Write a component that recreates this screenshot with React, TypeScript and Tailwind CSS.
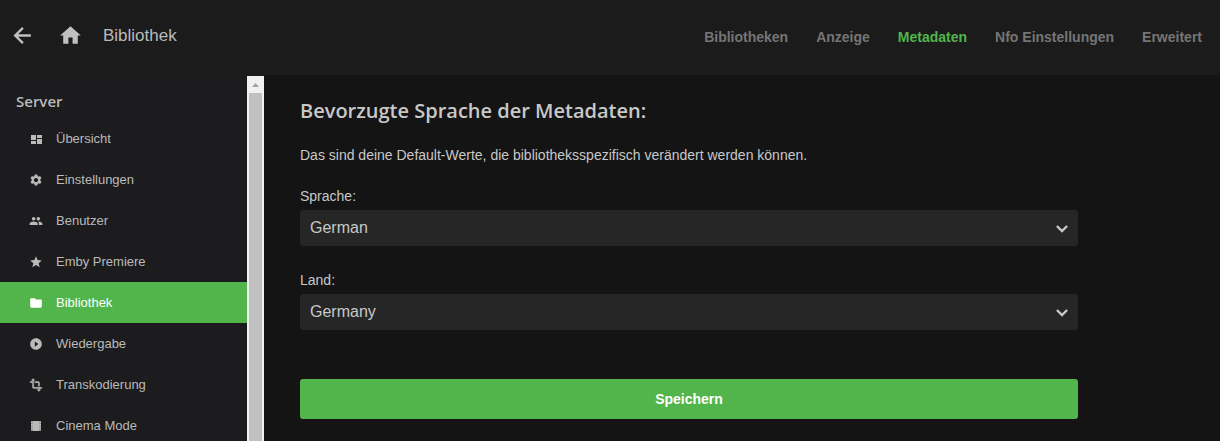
import { useState } from "react"
import type { ComponentType } from "react"
import { MdFolder, MdHome, MdPeople, MdPlayCircleFilled, MdSettings, MdStar } from "react-icons/md"

interface IconProps {
  className?: string
}

interface NavItem {
  label: string
  icon: ComponentType<IconProps>
}

const BackIcon = ({ className }: IconProps) => (
  <svg viewBox="0 0 24 24" className={className} fill="none" stroke="currentColor" strokeWidth="2.3">
    <path d="M20 12H5M12.4 4.6 5 12l7.4 7.4" />
  </svg>
)

const DashboardIcon = ({ className }: IconProps) => (
  <svg viewBox="0 0 14 14" className={className} fill="currentColor">
    <path d="M2 3h5v5H2zM2 9h5v3H2zM8 3h5v3H8zM8 7h5v5H8z" />
  </svg>
)

const TransformIcon = ({ className }: IconProps) => (
  <svg viewBox="0 0 24 24" className={className} fill="currentColor" stroke="currentColor" strokeWidth="0.7">
    <path d="M22 18v-2H8V4h2L7 1 4 4h2v2H2v2h4v8c0 1.1.9 2 2 2h8v2h-2l3 3 3-3h-2v-2h4zM10 8h6v6h2V8c0-1.1-.9-2-2-2h-6v2z" />
  </svg>
)

const FilmIcon = ({ className }: IconProps) => (
  <svg viewBox="0 0 14 14" className={className} fill="currentColor">
    <path d="M4 2h6v10H4z" />
    <path d="M2 2h3v10H2zM9 2h3v10H9z" opacity="0.75" />
    <path d="M2 3h2v1H2zM2 5h2v1H2zM2 7h2v1H2zM2 9h2v1H2zM10 3h2v1h-2zM10 5h2v1h-2zM10 7h2v1h-2zM10 9h2v1h-2z" />
  </svg>
)

const navItems: NavItem[] = [
  { label: "Übersicht", icon: DashboardIcon },
  { label: "Einstellungen", icon: MdSettings },
  { label: "Benutzer", icon: MdPeople },
  { label: "Emby Premiere", icon: MdStar },
  { label: "Bibliothek", icon: MdFolder },
  { label: "Wiedergabe", icon: MdPlayCircleFilled },
  { label: "Transkodierung", icon: TransformIcon },
  { label: "Cinema Mode", icon: FilmIcon },
]

const tabs = ["Bibliotheken", "Anzeige", "Metadaten", "Nfo Einstellungen", "Erweitert"]

interface SelectFieldProps {
  id: string
  label: string
  value: string
  options: string[]
  onChange: (value: string) => void
}

const SelectField = ({ id, label, value, options, onChange }: SelectFieldProps) => (
  <div className="mb-[22px]">
    <label htmlFor={id} className="block text-sm leading-6 mb-0.5">
      {label}
    </label>
    <div className="relative">
      <select
        id={id}
        value={value}
        onChange={(e) => onChange(e.target.value)}
        className="block w-full h-9 appearance-none rounded-[3px] bg-[#262626] pl-2.5 pr-10 text-base text-[#c8c8c8] focus:outline-none"
      >
        {options.map((option) => (
          <option key={option} value={option}>
            {option}
          </option>
        ))}
      </select>
      <svg
        viewBox="0 0 12 8"
        className="absolute right-2.5 top-[15px] w-3 h-2 pointer-events-none"
        fill="none"
        stroke="#c8c8c8"
        strokeWidth="2.4"
      >
        <path d="M.9 1 6 6.1 11.1 1" />
      </svg>
    </div>
  </div>
)

const App = () => {
  const [activeTab, setActiveTab] = useState("Metadaten")
  const [language, setLanguage] = useState("German")
  const [country, setCountry] = useState("Germany")

  return (
    <div className="h-screen flex flex-col overflow-hidden bg-[#141414] text-[#c8c8c8] font-['Liberation_Sans',Arial,sans-serif]">
      {/* Header */}
      <header className="shrink-0 h-[75px] flex items-center bg-[#1b1b1b] pl-2.5 pr-[18px] pb-1">
        <button type="button" aria-label="Zurück" className="text-[#c0c0c0]">
          <BackIcon className="size-[25px]" />
        </button>
        <button type="button" aria-label="Startseite" className="ml-[23px] text-[#c0c0c0]">
          <MdHome className="size-[25px]" />
        </button>
        <h1 className="ml-5 text-[17px] text-[#bababa]">Bibliothek</h1>
        <nav className="ml-auto flex gap-7 pt-0.5">
          {tabs.map((tab) => (
            <button
              key={tab}
              type="button"
              onClick={() => setActiveTab(tab)}
              className={`text-sm font-bold whitespace-nowrap ${tab === activeTab ? "text-[#52b54b]" : "text-[#757575]"}`}
            >
              {tab}
            </button>
          ))}
        </nav>
      </header>

      <div className="flex-1 min-h-0 flex">
        {/* Sidebar */}
        <aside className="w-[264px] shrink-0 flex bg-[#1c1c1e]">
          <div className="flex-1 overflow-hidden">
            <h2 className="pl-4 pt-4 pb-1.5 text-[15px] leading-[21px] font-semibold text-[#bababa] font-['Open_Sans',sans-serif]">
              Server
            </h2>
            <nav>
              {navItems.map(({ label, icon: Icon }) => (
                <a
                  key={label}
                  href="#"
                  className={`flex items-center h-[41px] pl-[29px] gap-[13px] text-[13px] ${
                    label === "Bibliothek" ? "bg-[#52b54b] text-white" : "text-[#bababa]"
                  }`}
                >
                  <Icon className="size-3.5" />
                  {label}
                </a>
              ))}
            </nav>
          </div>
          {/* Scrollbar */}
          <div className="w-[17px] mt-px flex flex-col bg-[#f1f1f1]">
            <div className="h-[17px] flex items-center justify-center">
              <svg viewBox="0 0 7 4" className="w-[7px] h-1" fill="#a3a3a3">
                <path d="M0 4 3.5 0 7 4z" />
              </svg>
            </div>
            <div className="flex-1 mx-0.5 bg-[#c1c1c1]" />
          </div>
        </aside>

        {/* Content */}
        <main className="flex-1 px-9 pt-5 overflow-hidden">
          <form className="max-w-[778px]" onSubmit={(e) => e.preventDefault()}>
            <h2 className="text-xl leading-8 font-semibold font-['Open_Sans',sans-serif]">
              Bevorzugte Sprache der Metadaten:
            </h2>
            <p className="mt-4 mb-[17px] text-sm leading-6">
              Das sind deine Default-Werte, die bibliotheksspezifisch verändert werden können.
            </p>
            <SelectField
              id="language"
              label="Sprache:"
              value={language}
              options={["German", "English", "French"]}
              onChange={setLanguage}
            />
            <SelectField
              id="country"
              label="Land:"
              value={country}
              options={["Germany", "Austria", "Switzerland"]}
              onChange={setCountry}
            />
            <button
              type="submit"
              className="mt-[27px] w-full h-10 rounded-[3px] bg-[#52b54b] text-sm font-bold text-white"
            >
              Speichern
            </button>
          </form>
        </main>
      </div>
    </div>
  )
}

export default App
